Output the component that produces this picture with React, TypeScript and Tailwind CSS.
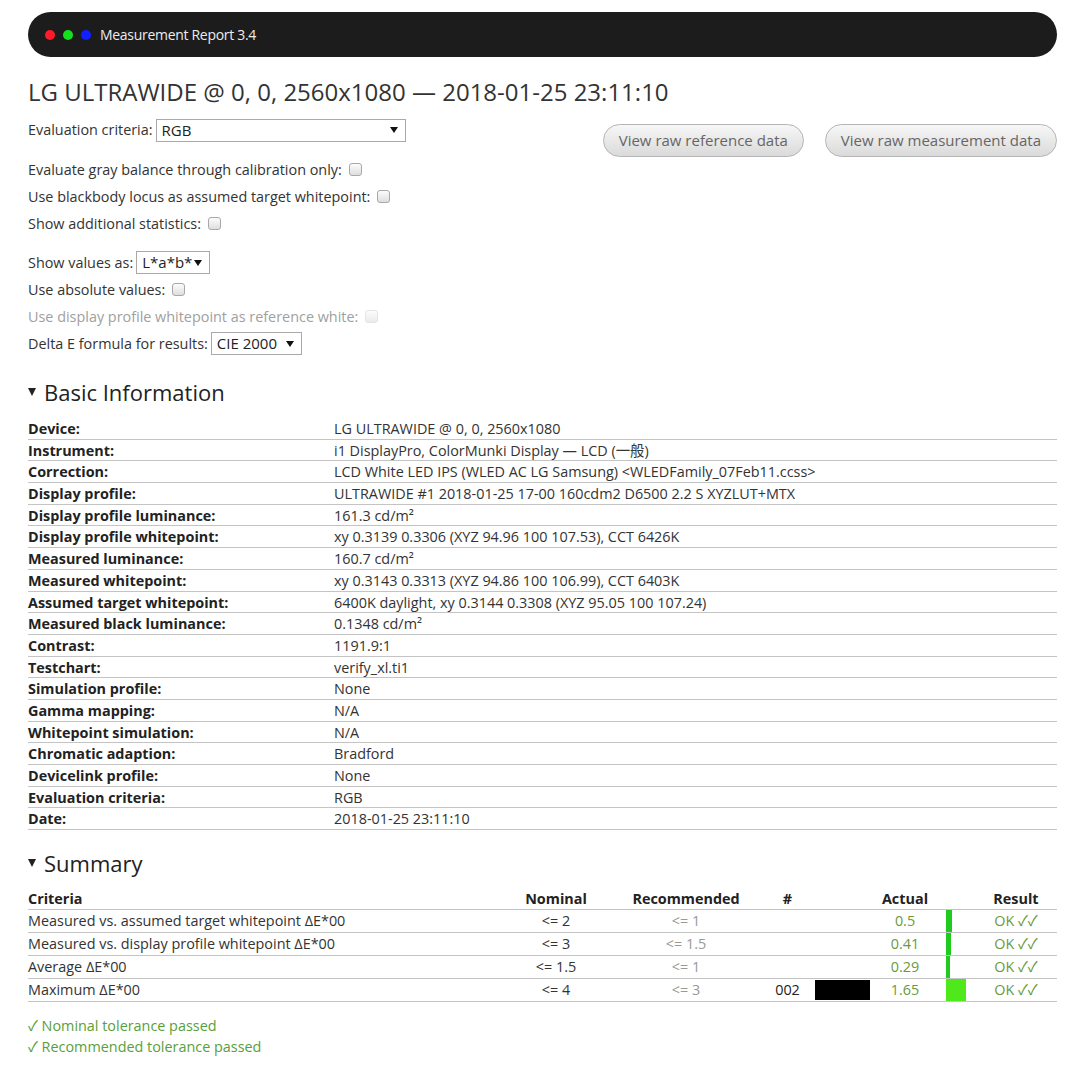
const basic: [string, string][] = [
  ['Device:', 'LG ULTRAWIDE @ 0, 0, 2560x1080'],
  ['Instrument:', 'i1 DisplayPro, ColorMunki Display — LCD (一般)'],
  ['Correction:', 'LCD White LED IPS (WLED AC LG Samsung) <WLEDFamily_07Feb11.ccss>'],
  ['Display profile:', 'ULTRAWIDE #1 2018-01-25 17-00 160cdm2 D6500 2.2 S XYZLUT+MTX'],
  ['Display profile luminance:', '161.3 cd/m²'],
  ['Display profile whitepoint:', 'xy 0.3139 0.3306 (XYZ 94.96 100 107.53), CCT 6426K'],
  ['Measured luminance:', '160.7 cd/m²'],
  ['Measured whitepoint:', 'xy 0.3143 0.3313 (XYZ 94.86 100 106.99), CCT 6403K'],
  ['Assumed target whitepoint:', '6400K daylight, xy 0.3144 0.3308 (XYZ 95.05 100 107.24)'],
  ['Measured black luminance:', '0.1348 cd/m²'],
  ['Contrast:', '1191.9:1'],
  ['Testchart:', 'verify_xl.ti1'],
  ['Simulation profile:', 'None'],
  ['Gamma mapping:', 'N/A'],
  ['Whitepoint simulation:', 'N/A'],
  ['Chromatic adaption:', 'Bradford'],
  ['Devicelink profile:', 'None'],
  ['Evaluation criteria:', 'RGB'],
  ['Date:', '2018-01-25 23:11:10'],
];

const summary = [
  { name: 'Measured vs. assumed target whitepoint ΔE*00', nominal: '<= 2', rec: '<= 1', num: '', swatch: false, actual: '0.5', bar: 6, color: '#1ecb1e' },
  { name: 'Measured vs. display profile whitepoint ΔE*00', nominal: '<= 3', rec: '<= 1.5', num: '', swatch: false, actual: '0.41', bar: 5, color: '#1ecb1e' },
  { name: 'Average ΔE*00', nominal: '<= 1.5', rec: '<= 1', num: '', swatch: false, actual: '0.29', bar: 4, color: '#1ecb1e' },
  { name: 'Maximum ΔE*00', nominal: '<= 4', rec: '<= 3', num: '002', swatch: true, actual: '1.65', bar: 20, color: '#4fe81a' },
];

function Checkbox({ disabled }: { disabled?: boolean }) {
  return (
    <span
      className={`ml-[7px] inline-block h-[13px] w-[13px] rounded-[3px] border bg-gradient-to-b from-[#fcfcfc] to-[#dedede] ${
        disabled ? 'border-[#d4d4d4] opacity-60' : 'border-[#a8a8a8]'
      }`}
    />
  );
}

function Select({ value, width }: { value: string; width: string }) {
  return (
    <span className={`ml-[3px] inline-flex h-[23px] items-center justify-between border border-[#a9a9a9] bg-white pl-[5px] pr-[7px] text-[15px] text-[#222] ${width}`}>
      <span>{value}</span>
      <span className="h-0 w-0 border-x-[4px] border-t-[6px] border-x-transparent border-t-[#111]" />
    </span>
  );
}

function CheckRow({ label, disabled }: { label: string; disabled?: boolean }) {
  return (
    <div className={`flex h-[27px] items-center ${disabled ? 'text-[#a0a0a0]' : ''}`}>
      <span>{label}</span>
      <Checkbox disabled={disabled} />
    </div>
  );
}

function Heading({ children }: { children: string }) {
  return (
    <h2 className="flex h-[26px] items-center text-[22px] leading-none text-[#222]">
      <span className="mr-[8px] h-0 w-0 border-x-[4.5px] border-t-[8px] border-x-transparent border-t-[#222]" />
      {children}
    </h2>
  );
}

export default function App() {
  return (
    <div
      className="min-h-[1067px] bg-white pb-4 pl-[28px] pr-[23px] pt-[12px] text-[14.4px] text-[#333]"
      style={{ fontFamily: '"Open Sans", "Noto Sans CJK SC", sans-serif' }}
    >
      {/* Title bar */}
      <div className="flex h-[45px] items-center rounded-full bg-[#1c1c1c] pl-[17px]">
        <span className="h-[10px] w-[10px] rounded-full bg-[#ff1a2a]" />
        <span className="ml-[8px] h-[10px] w-[10px] rounded-full bg-[#14e01e]" />
        <span className="ml-[8px] h-[10px] w-[10px] rounded-full bg-[#1020ff]" />
        <span className="ml-[9px] text-[14px] tracking-[-0.3px] text-[#ececec]">Measurement Report 3.4</span>
      </div>

      <h1 className="mt-[20px] text-[24px] leading-[30px] text-[#333]">
        LG ULTRAWIDE @ 0, 0, 2560x1080 — 2018-01-25 23:11:10
      </h1>

      {/* Controls */}
      <div className="mt-[9px] flex justify-between">
        <div className="flex flex-col">
          <div className="flex h-[28px] items-center">
            <span>Evaluation criteria:</span>
            <Select value="RGB" width="w-[250px]" />
          </div>
          <div className="mt-[12px]">
            <CheckRow label="Evaluate gray balance through calibration only:" />
            <CheckRow label="Use blackbody locus as assumed target whitepoint:" />
            <CheckRow label="Show additional statistics:" />
          </div>
          <div className="mt-[12px] flex h-[27px] items-center">
            <span>Show values as:</span>
            <Select value="L*a*b*" width="w-[74px]" />
          </div>
          <CheckRow label="Use absolute values:" />
          <CheckRow label="Use display profile whitepoint as reference white:" disabled />
          <div className="flex h-[27px] items-center">
            <span>Delta E formula for results:</span>
            <Select value="CIE 2000" width="w-[91px]" />
          </div>
        </div>
        <div className="mt-[8px] flex items-start gap-[21px]">
          <button className="h-[33px] rounded-full border border-[#b4b4b4] bg-gradient-to-b from-[#f7f7f7] to-[#dadada] px-[15px] text-[15px] text-[#666]">
            View raw reference data
          </button>
          <button className="h-[33px] rounded-full border border-[#b4b4b4] bg-gradient-to-b from-[#f7f7f7] to-[#dadada] px-[15px] text-[15px] text-[#666]">
            View raw measurement data
          </button>
        </div>
      </div>

      {/* Basic Information */}
      <div className="mt-[22px]">
        <Heading>Basic Information</Heading>
        <div className="mt-[13px]">
          {basic.map(([k, v]) => (
            <div key={k} className="grid h-[21.7px] grid-cols-[306px_1fr] items-center border-b border-[#c4c4c4]">
              <span className="font-bold text-[#222]">{k}</span>
              <span className="text-[#333]">{v}</span>
            </div>
          ))}
        </div>
      </div>

      {/* Summary */}
      <div className="mt-[20px]">
        <Heading>Summary</Heading>
        <div className="mt-[12px]">
          <div className="grid h-[22px] grid-cols-[472px_112px_148px_55px_55px_70px_35px_82px] items-center border-b border-[#c4c4c4] font-bold text-[#222]">
            <span>Criteria</span>
            <span className="text-center">Nominal</span>
            <span className="text-center">Recommended</span>
            <span className="text-center">#</span>
            <span />
            <span className="text-center">Actual</span>
            <span />
            <span className="text-center">Result</span>
          </div>
          {summary.map((r) => (
            <div
              key={r.name}
              className="grid h-[23px] grid-cols-[472px_112px_148px_55px_55px_70px_35px_82px] items-stretch border-b border-[#c4c4c4]"
            >
              <span className="self-center">{r.name}</span>
              <span className="self-center text-center">{r.nominal}</span>
              <span className="self-center text-center text-[#999]">{r.rec}</span>
              <span className="self-center text-center text-[#222]">{r.num}</span>
              <span className="py-[1px]">{r.swatch && <span className="block h-full w-full bg-black" />}</span>
              <span className="self-center text-center text-[#6a9a3c]">{r.actual}</span>
              <span className="pl-[6px]">
                <span className="block h-full" style={{ width: r.bar, backgroundColor: r.color }} />
              </span>
              <span className="self-center text-center text-[#6a9a3c]">OK ✓✓</span>
            </div>
          ))}
        </div>
        <div className="mt-[13px] text-[#5aa03a]">
          <div className="leading-[21px]">✓ Nominal tolerance passed</div>
          <div className="leading-[21px]">✓ Recommended tolerance passed</div>
        </div>
      </div>
    </div>
  );
}
